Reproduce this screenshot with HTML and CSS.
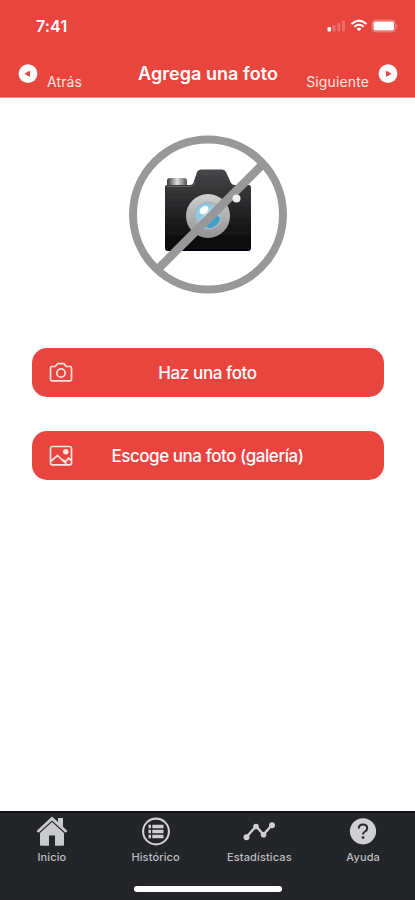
FILE: index.html
```html
<!DOCTYPE html>
<html lang="es">
<head>
<meta charset="utf-8">
<meta name="viewport" content="width=device-width, initial-scale=1">
<title>Agrega una foto</title>
<link rel="stylesheet" href="styles.css">
</head>
<body>
<div class="app">
  <header class="header">
    <div class="status">
      <span class="time">7:41</span>
      <svg class="status-icons" width="72" height="16" viewBox="0 0 72 16" fill="#fff">
        <rect x="0.500" y="10" width="3.500" height="4.500" rx="1"/>
        <g opacity=".22"><rect x="5.500" y="8" width="3" height="6.500" rx="1"/><rect x="10.300" y="6" width="3" height="8.500" rx="1"/><rect x="15" y="3.500" width="3" height="11" rx="1"/></g>
        <g fill="none" stroke="#fff" stroke-width="2"><path d="M24.500 7Q32 .300 39.500 7"/><path d="M27.300 9.800Q32 5.800 36.700 9.800"/></g>
        <path d="M29.600 11.800Q32 9.800 34.400 11.800L32 14.300Z"/>
        <rect x="45.200" y="3.200" width="23" height="11.600" rx="3" fill="none" stroke="#fff" stroke-opacity=".4"/>
        <rect x="46.500" y="4.500" width="20.500" height="9" rx="1.800"/>
        <path d="M69.500 7q2 2 0 4z" opacity=".5"/>
      </svg>
    </div>
    <nav class="bar">
      <a class="nav-link">
        <svg width="20" height="20" viewBox="0 0 20 20"><circle cx="10" cy="9.700" r="9.400" fill="#fff"/><path d="M6.300 9.700L12 6.500V12.900Z" fill="#e9453f"/></svg>
        <span class="back">Atrás</span>
      </a>
      <h1 class="title">Agrega una foto</h1>
      <a class="nav-link next-link">
        <span class="next">Siguiente</span>
        <svg width="20" height="20" viewBox="0 0 20 20"><circle cx="10" cy="9.700" r="9.400" fill="#fff"/><path d="M13.700 9.700L8 6.500V12.900Z" fill="#e9453f"/></svg>
      </a>
    </nav>
  </header>
  <main class="content">
    <svg class="photo" width="160" height="160" viewBox="0 0 160 160">
      <defs>
        <linearGradient id="body" x1="0" y1="0" x2="0" y2="1"><stop offset="0" stop-color="#48484b"/><stop offset=".5" stop-color="#252527"/><stop offset="1" stop-color="#050506"/></linearGradient>
        <linearGradient id="ring" x1="0" y1="0" x2="0" y2="1"><stop offset="0" stop-color="#d0d0d0"/><stop offset="1" stop-color="#929292"/></linearGradient>
        <linearGradient id="dial"><stop offset="0" stop-color="#333"/><stop offset=".5" stop-color="#e1e1e1"/><stop offset="1" stop-color="#555"/></linearGradient>
        <radialGradient id="lens"><stop offset="0" stop-color="#ecfbff"/><stop offset=".5" stop-color="#a5d3e4"/><stop offset="1" stop-color="#a5b3ba"/></radialGradient>
        <filter id="soft"><feGaussianBlur stdDeviation=".6"/></filter>
      </defs>
      <g filter="url(#soft)">
        <rect x="39" y="44" width="20" height="9" rx="3" fill="url(#dial)"/>
        <path d="M39 51H62Q65 51 66 47L69 38Q70 35.500 73 35.500H94Q97 35.500 98 38L103 49Q104 51 107 51H121Q123 51 123 54V114Q123 117 120 117H40Q37 117 37 114V53Q37 51 39 51Z" fill="url(#body)"/>
        <path d="M39 52.500H62Q66 52 67 48" fill="none" stroke="#66666a"/>
        <circle cx="80" cy="82" r="22" fill="url(#ring)"/>
        <circle cx="80.500" cy="81.500" r="14" fill="url(#lens)"/>
        <path d="M68 81Q69 70 80 70L85 72L72 85Z" fill="#8acde5"/>
        <ellipse cx="76" cy="76" rx="5" ry="3.500" transform="rotate(-40 76 76)" fill="#fff"/>
        <ellipse cx="85" cy="88" rx="8" ry="4.500" transform="rotate(-38 85 88)" fill="#429fc6"/>
        <path d="M30.500 134.500L134 31" stroke="#989898" stroke-width="8.500"/>
        <circle cx="108.500" cy="64.500" r="4" fill="#eee"/>
        <circle cx="80" cy="80.500" r="75" fill="none" stroke="#989898" stroke-width="8"/>
      </g>
    </svg>
    <button class="action camera">
      <svg width="24" height="22" viewBox="0 0 24 22" fill="none" stroke="#ffe3df" stroke-width="1.700" stroke-linejoin="round"><path d="M3 4.500H6.200L8.600 1.700H15L17.200 4.500H21Q22.500 4.500 22.500 6V17.300Q22.500 18.800 21 18.800H3Q1.500 18.800 1.500 17.300V6Q1.500 4.500 3 4.500Z"/><circle cx="12" cy="11" r="4.200"/></svg>
      <span>Haz una foto</span>
    </button>
    <button class="action gallery">
      <svg width="24" height="22" viewBox="0 0 24 22" fill="none" stroke="#ffe3df" stroke-width="1.700" stroke-linejoin="round"><rect x="1.500" y="1.500" width="21" height="18.300" rx="2"/><path d="M2 16L8.500 10.500L17.500 19M12.700 14.500L17 16.500L19.500 12.800L22 15.500"/><circle cx="16.800" cy="6.700" r="1.900" fill="#ffe3df"/></svg>
      <span>Escoge una foto (galería)</span>
    </button>
  </main>
  <footer class="footer">
    <nav class="tabs">
      <a class="tab">
        <svg width="34" height="34" viewBox="0 0 34 34" fill="#c9cacc"><path d="M1.500 17L17 2.500L23 8V4H28V12.700L32.500 17L30.500 18.700L17 6.400L3.500 18.700Z"/><path d="M5 19L17 8L29 19V30.500Q29 31.700 28 31.700H20V21.500H14V31.700H6Q5 31.700 5 30.500Z"/></svg>
        <span class="l-inicio">Inicio</span>
      </a>
      <a class="tab">
        <svg width="34" height="34" viewBox="0 0 34 34"><circle cx="17" cy="17.500" r="12.900" fill="none" stroke="#d0d0d2" stroke-width="2.100"/><path d="M9.500 12.500H12M13.300 12.500H24.500M9.500 17.500H12M13.300 17.500H24.500M9.500 22.500H12M13.300 22.500H24.500" stroke="#d0d0d2" stroke-width="3.500"/></svg>
        <span class="l-historico">Histórico</span>
      </a>
      <a class="tab">
        <svg width="34" height="34" viewBox="0 0 34 34" fill="#d0d0d2"><path d="M4.500 23L14 12.300L21.500 20.500L30 11" fill="none" stroke="#d0d0d2" stroke-width="2.400"/><circle cx="4.500" cy="23.300" r="3"/><circle cx="14" cy="12.500" r="2.800"/><circle cx="21.500" cy="20.800" r="2.800"/><circle cx="30" cy="11.200" r="3"/></svg>
        <span class="l-estadisticas">Estadísticas</span>
      </a>
      <a class="tab">
        <svg width="34" height="34" viewBox="0 0 34 34"><circle cx="17" cy="17.300" r="13.100" fill="#d0d0d2"/><path d="M12.800 14.500Q12.800 10.600 17 10.600Q21.200 10.600 21.200 14.200Q21.200 16.100 19 17.500Q17 18.700 17 20.600" fill="none" stroke="#292a2e" stroke-width="2"/><circle cx="17" cy="23.600" r="1.400" fill="#292a2e"/></svg>
        <span class="l-ayuda">Ayuda</span>
      </a>
    </nav>
    <div class="home-indicator"></div>
  </footer>
</div>
</body>
</html>
```
FILE: styles.css
```css
* { box-sizing: border-box; }
body { margin: 0; background: #fff; font-family: Inter, "Liberation Sans", sans-serif; }
.app { width: 415px; height: 900px; display: flex; flex-direction: column; overflow: hidden; }
.header { height: 98px; flex: none; background: #e9453f; border-bottom: 1px solid #ef8c83; color: #fff; }
.status { height: 52px; padding: 17px 16px 0 36px; display: flex; justify-content: space-between; align-items: flex-start; }
.time { font-size: 16px; line-height: 18px; font-weight: 600; letter-spacing: .15px; }
.bar { height: 44px; display: grid; grid-template-columns: 1fr auto 1fr; padding: 0 17px 0 18px; }
.nav-link { display: flex; align-items: flex-start; gap: 9px; padding-top: 12px; color: #ffe4df; font-size: 14px; line-height: 18px; letter-spacing: .12px; }
.nav-link span { margin-top: 9px; }
.next-link { justify-content: flex-end; }
.title { margin: 12px 0 0; font-size: 18px; line-height: 20px; font-weight: 600; white-space: nowrap; letter-spacing: .05px; }
.content { flex: 1; display: flex; flex-direction: column; align-items: center; padding-top: 36px; }
.photo { flex: none; }
.action { flex: none; width: 352px; height: 49px; border: 0; border-radius: 15px; background: #e9453f; color: #fff; display: grid; grid-template-columns: 24px 1fr 24px; align-items: center; padding: 0 18px 0 17px; font: 500 17px/22px Inter, sans-serif; white-space: nowrap; }
.action span { justify-self: center; }
.camera { margin-top: 54px; letter-spacing: -.4px; }
.camera span { margin-left: 1px; }
.gallery { margin-top: 34px; letter-spacing: -.45px; }
.gallery span { margin-left: 1px; }
.footer { height: 89px; flex: none; background: #242529; border-top: 2px solid #111216; display: flex; flex-direction: column; align-items: center; }
.tabs { width: 100%; display: grid; grid-template-columns: repeat(4, 1fr); padding-top: 1px; }
.tab { display: flex; flex-direction: column; align-items: center; color: #bdbec1; font-size: 11px; line-height: 14px; font-weight: 500; letter-spacing: .12px; }
.tab span { margin-top: 2px; }
.home-indicator { width: 148px; height: 6px; border-radius: 3px; background: #fff; margin-top: 22px; }
```
